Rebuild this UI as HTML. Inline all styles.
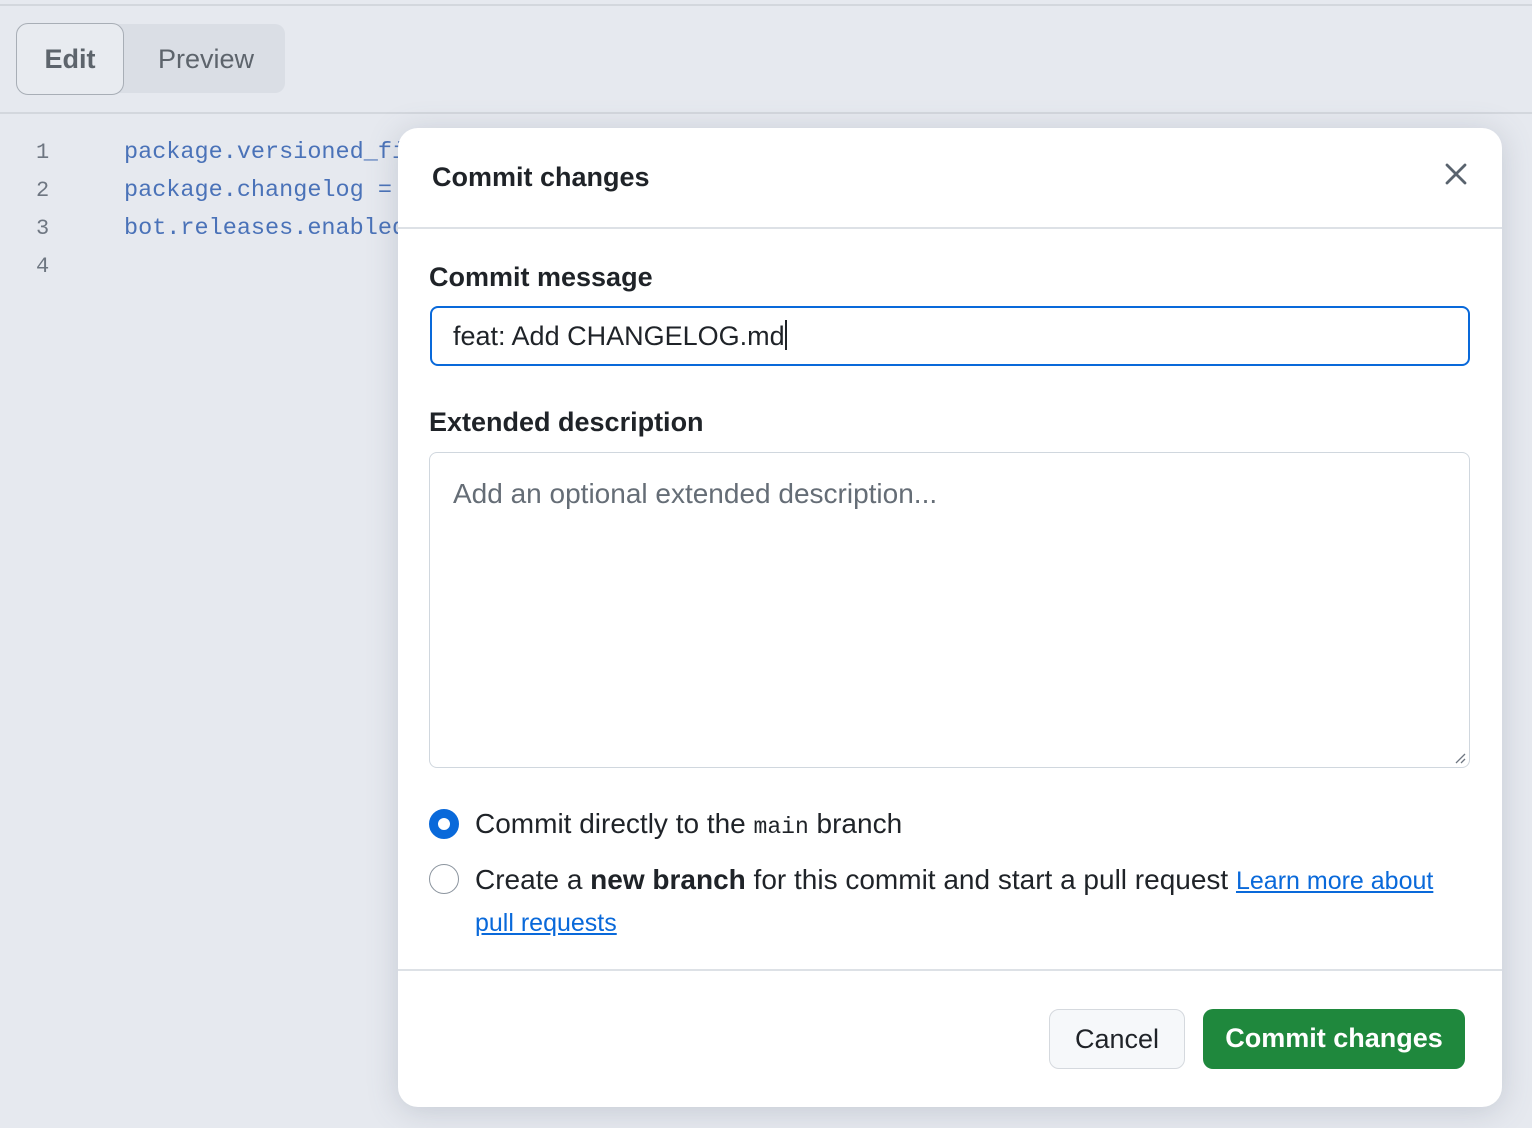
<!DOCTYPE html>
<html><head><meta charset="utf-8"><style>
*{box-sizing:border-box;margin:0;padding:0}
body{width:1532px;height:1128px;overflow:hidden;background:#e6e9ef;font-family:"Liberation Sans",Helvetica,Arial,sans-serif;position:relative;color:#1f2328}
.top{position:absolute;left:0;top:0;width:1532px;height:6px;border-bottom:2px solid #d3d7dd;background:#e6e9ef}
.tabs{position:absolute;left:16px;top:24px;width:269px;height:69px;background:#dadee5;border-radius:10px}
.edit{position:absolute;left:16px;top:23px;width:108px;height:72px;border:1px solid #a8aeb6;border-radius:12px;background:#e8ebf0;font-size:27px;font-weight:bold;color:#5d646c;text-align:center;line-height:70px}
.prev{position:absolute;left:158px;top:23px;font-size:27px;color:#5d646c;line-height:72px}
.hr{position:absolute;left:0;top:112px;width:1532px;height:2px;background:#d3d7dd}
.ln{position:absolute;left:36px;font-family:"Liberation Mono",monospace;font-size:22px;color:#6e7681}
.code{position:absolute;left:124px;font-family:"Liberation Mono",monospace;font-size:23.5px;color:#4a72b8;white-space:nowrap}
.modal{position:absolute;left:398px;top:128px;width:1104px;height:979px;background:#fff;border-radius:20px;box-shadow:0 4px 30px rgba(100,110,130,.25);overflow:hidden}
.title{position:absolute;left:34px;top:34px;font-size:27px;font-weight:bold}
.close{position:absolute;left:1046px;top:34px}
.hd{position:absolute;left:0;top:99px;width:1104px;height:2px;background:#dde1e6}
.lbl{position:absolute;left:31px;font-size:27px;font-weight:bold}
.inp{position:absolute;left:32px;top:178px;width:1040px;height:60px;border:2px solid #0969da;border-radius:8px;font-size:27px;line-height:56px;padding-left:21px}
.cur{display:inline-block;width:2px;height:30px;background:#1f2328;vertical-align:-5px}
.ta{position:absolute;left:31px;top:324px;width:1041px;height:316px;border:1px solid #d0d7de;border-radius:8px;font-size:28px;color:#656d76;padding:25px 0 0 23px}
.radio{position:absolute;left:31px;width:30px;height:30px;border-radius:50%}
.opt{position:absolute;left:77px;font-size:28px;white-space:nowrap}
.mono{font-family:"Liberation Mono",monospace;font-size:23px}
a{color:#0969da;text-decoration:underline}
.fd{position:absolute;left:0;top:841px;width:1104px;height:2px;background:#dde1e6}
.btn{position:absolute;top:881px;height:60px;border-radius:10px;font-size:27px;text-align:center;line-height:58px}
</style></head><body>
<div class="top"></div>
<div class="tabs"></div>
<div class="edit">Edit</div>
<div class="prev">Preview</div>
<div class="hr"></div>
<div class="ln" style="top:140px">1</div>
<div class="ln" style="top:178px">2</div>
<div class="ln" style="top:216px">3</div>
<div class="ln" style="top:254px">4</div>
<div class="code" style="top:139px">package.versioned_files</div>
<div class="code" style="top:177px">package.changelog = </div>
<div class="code" style="top:215px">bot.releases.enabled</div>
<div class="modal">
<div class="title">Commit changes</div>
<svg class="close" width="24" height="24" viewBox="0 0 24 24"><path d="M3 3L21 21M21 3L3 21" stroke="#59636e" stroke-width="2.8" stroke-linecap="round"/></svg>
<div class="hd"></div>
<div class="lbl" style="top:134px">Commit message</div>
<div class="inp">feat: Add CHANGELOG.md<span class="cur"></span></div>
<div class="lbl" style="top:279px">Extended description</div>
<div class="ta">Add an optional extended description...
<svg style="position:absolute;right:3px;bottom:3px" width="12" height="12"><path d="M11 2L2 11M11 7L7 11" stroke="#6e7681" stroke-width="1.3"/></svg></div>
<div class="radio" style="top:681px;border:9px solid #0969da"></div>
<div class="opt" style="top:680px">Commit directly to the <span class="mono">main</span> branch</div>
<div class="radio" style="top:736px;border:1px solid #8c959f"></div>
<div class="opt" style="top:736px">Create a <b>new branch</b> for this commit and start a pull request <a style="font-size:25px">Learn more about</a></div>
<div class="opt" style="top:778px"><a style="font-size:25px">pull requests</a></div>
<div class="fd"></div>
<div class="btn" style="left:651px;width:136px;border:1px solid #d5d9de;background:#f6f8fa;color:#1f2328">Cancel</div>
<div class="btn" style="left:805px;width:262px;background:#1f883d;color:#fff;font-weight:bold">Commit changes</div>
</div>
</body></html>
